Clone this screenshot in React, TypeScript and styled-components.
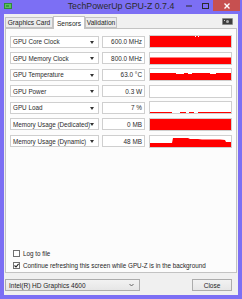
import React from 'react'
import styled, { createGlobalStyle } from 'styled-components'

const GlobalStyle = createGlobalStyle`
  html, body {
    margin: 0;
    padding: 0;
    background: #7c6ff4;
  }
  body {
    font-family: "Liberation Sans", Arial, sans-serif;
  }
`

const Window = styled.div`
  width: 242px;
  height: 299px;
  box-sizing: border-box;
  background: #7c6ff4;
  padding: 0 4px 4px 4px;
  display: flex;
  flex-direction: column;
`

const TitleBar = styled.div`
  height: 14px;
  display: flex;
  align-items: flex-start;
  position: relative;
`

const AppIcon = styled.svg`
  margin: 3px 0 0 0;
  width: 8px;
  height: 6px;
`

const Title = styled.div`
  position: absolute;
  left: 0;
  right: 0;
  top: 1px;
  text-align: center;
  font-size: 8.8px;
  line-height: 11px;
  color: #2b2b2b;
`

const Controls = styled.div`
  margin-left: auto;
  display: flex;
  align-items: flex-start;
  margin-right: -2px;
`

const CtrlButton = styled.div<{ $close?: boolean }>`
  width: ${({ $close }) => ($close ? '27px' : '16px')};
  height: 11px;
  background: ${({ $close }) => ($close ? '#c75050' : 'transparent')};
  display: flex;
  align-items: center;
  justify-content: center;
`

const Client = styled.div`
  flex: 1;
  background: #f0f0f0;
  display: flex;
  flex-direction: column;
  padding: 2px 1px 0 1px;
`

const TabStrip = styled.div`
  height: 12px;
  display: flex;
  align-items: flex-end;
  position: relative;
`

const Tab = styled.div<{ $active?: boolean; $w: number }>`
  width: ${({ $w }) => $w}px;
  height: ${({ $active }) => ($active ? '13px' : '11px')};
  box-sizing: border-box;
  border: 1px solid #c3c3c3;
  border-bottom: ${({ $active }) => ($active ? 'none' : '1px solid #c3c3c3')};
  background: ${({ $active }) => ($active ? '#ffffff' : '#ececec')};
  margin-bottom: ${({ $active }) => ($active ? '-1px' : '0')};
  font-size: 6.6px;
  color: #1e1e1e;
  display: flex;
  align-items: center;
  justify-content: center;
  position: relative;
  z-index: ${({ $active }) => ($active ? 2 : 1)};
`

const CameraIcon = styled.svg`
  position: absolute;
  right: 4px;
  top: 2px;
  width: 11px;
  height: 7px;
`

const Panel = styled.div`
  height: 245px;
  box-sizing: border-box;
  border: 1px solid #c3c3c3;
  background: #fcfcfc;
  display: flex;
  flex-direction: column;
  padding: 6px 4px 3px 4px;
`

const Rows = styled.div`
  display: flex;
  flex-direction: column;
  gap: 3.6px;
`

const Row = styled.div`
  display: flex;
  align-items: center;
  height: 13px;
`

const LabelBox = styled.div`
  width: 89px;
  height: 12px;
  box-sizing: border-box;
  border: 1px solid #cfcfcf;
  background: #ffffff;
  display: flex;
  align-items: center;
  padding-left: 2px;
  font-size: 6.3px;
  color: #2a2a2a;
  position: relative;
  white-space: nowrap;
  overflow: hidden;
`

const Arrow = styled.span`
  position: absolute;
  right: 4px;
  top: 4px;
  width: 0;
  height: 0;
  border-left: 2px solid transparent;
  border-right: 2px solid transparent;
  border-top: 3px solid #333;
`

const ValueBox = styled.div`
  width: 43px;
  height: 12px;
  margin-left: 3px;
  box-sizing: border-box;
  border: 1px solid #cfcfcf;
  background: #ffffff;
  display: flex;
  align-items: center;
  justify-content: flex-end;
  padding-right: 2px;
  font-size: 6.4px;
  color: #2a2a2a;
  white-space: nowrap;
`

const GraphBox = styled.div`
  width: 83px;
  height: 13px;
  margin-left: 4px;
  box-sizing: border-box;
  border: 1px solid #cfcfcf;
  background: #ffffff;
  display: flex;
`

const GraphSvg = styled.svg`
  width: 100%;
  height: 100%;
  display: block;
`

const Checks = styled.div`
  margin-top: auto;
  display: flex;
  flex-direction: column;
  gap: 5px;
  padding-left: 3px;
`

const CheckRow = styled.label`
  display: flex;
  align-items: center;
  gap: 3px;
  font-size: 6.3px;
  color: #1e1e1e;
  white-space: nowrap;
  height: 7px;
`

const CheckBox = styled.span`
  width: 7px;
  height: 7px;
  box-sizing: border-box;
  border: 1px solid #707070;
  background: #ffffff;
  display: flex;
  align-items: center;
  justify-content: center;
`

const Footer = styled.div`
  display: flex;
  align-items: center;
  padding: 6px 5px 0 0;
`

const Combo = styled.div`
  width: 135px;
  height: 12px;
  box-sizing: border-box;
  border: 1px solid #acacac;
  background: linear-gradient(#f2f2f2, #e6e6e6);
  display: flex;
  align-items: center;
  padding: 0 5px 0 3px;
  font-size: 6.5px;
  color: #1e1e1e;
`

const Chevron = styled.svg`
  margin-left: auto;
  width: 5px;
  height: 4px;
`

const CloseButton = styled.div`
  margin-left: auto;
  width: 40px;
  height: 12px;
  box-sizing: border-box;
  border: 1px solid #acacac;
  background: linear-gradient(#f2f2f2, #e6e6e6);
  display: flex;
  align-items: center;
  justify-content: center;
  font-size: 6.5px;
  color: #1e1e1e;
`

type Sensor = { label: string; value: string; graph: React.ReactNode }

const RED = '#ff0000'

const sensors: Sensor[] = [
  {
    label: 'GPU Core Clock',
    value: '600.0 MHz',
    graph: (
      <>
        <rect x="0" y="0" width="81" height="11" fill={RED} />
        <rect x="45" y="0" width="1" height="1" fill="#fff" />
        <rect x="48" y="0" width="1" height="1" fill="#fff" />
      </>
    ),
  },
  {
    label: 'GPU Memory Clock',
    value: '800.0 MHz',
    graph: <polygon points="0,4.5 81,4.5 81,11 0,11" fill={RED} />,
  },
  {
    label: 'GPU Temperature',
    value: '63.0 °C',
    graph: (
      <>
        <polygon points="0,4 81,4 81,11 0,11" fill={RED} />
        <rect x="26" y="4" width="8" height="1" fill="#fff" />
        <rect x="38" y="4" width="4" height="1" fill="#fff" />
        <rect x="60" y="4" width="6" height="1" fill="#fff" />
      </>
    ),
  },
  { label: 'GPU Power', value: '0.3 W', graph: null },
  {
    label: 'GPU Load',
    value: '7 %',
    graph: (
      <>
        <rect x="0" y="10" width="22" height="1" fill={RED} />
        <rect x="30" y="10" width="6" height="1" fill={RED} />
        <rect x="39" y="10" width="5" height="1" fill={RED} />
        <rect x="48" y="10" width="33" height="1" fill={RED} />
      </>
    ),
  },
  {
    label: 'Memory Usage (Dedicated)',
    value: '0 MB',
    graph: <rect x="0" y="0" width="81" height="11" fill={RED} />,
  },
  {
    label: 'Memory Usage (Dynamic)',
    value: '48 MB',
    graph: (
      <polygon
        points="0,7 22,7 23,2 38,2 40,3 48,3 52,3.5 70,3.5 75,4 76,6 81,6 81,11 0,11"
        fill={RED}
      />
    ),
  },
]

export default function App() {
  return (
    <>
      <GlobalStyle />
      <Window>
        <TitleBar>
          <AppIcon viewBox="0 0 8 6">
            <rect x="0" y="0" width="8" height="6" fill="#2f8a3a" />
            <rect x="1" y="1" width="6" height="4" fill="#5cc25c" />
            <rect x="2" y="2" width="3" height="2" fill="#3a9a44" />
          </AppIcon>
          <Title>TechPowerUp GPU-Z 0.7.4</Title>
          <Controls>
            <CtrlButton>
              <svg width="6" height="2" viewBox="0 0 6 2">
                <rect x="0" y="0.5" width="6" height="1" fill="#2b2b2b" />
              </svg>
            </CtrlButton>
            <CtrlButton>
              <svg width="7" height="6" viewBox="0 0 7 6">
                <rect x="0.5" y="0.5" width="6" height="5" fill="none" stroke="#2b2b2b" strokeWidth="1" />
              </svg>
            </CtrlButton>
            <CtrlButton $close>
              <svg width="6" height="6" viewBox="0 0 6 6">
                <path d="M0.5 0.5 L5.5 5.5 M5.5 0.5 L0.5 5.5" stroke="#fff" strokeWidth="1.4" />
              </svg>
            </CtrlButton>
          </Controls>
        </TitleBar>
        <Client>
          <TabStrip>
            <Tab $w={48}>Graphics Card</Tab>
            <Tab $w={32} $active>
              Sensors
            </Tab>
            <Tab $w={32}>Validation</Tab>
            <CameraIcon viewBox="0 0 11 7">
              <rect x="0" y="0" width="11" height="7" rx="1" fill="#8a8a8a" />
              <rect x="1" y="1" width="9" height="5" fill="#3d3d3d" />
              <circle cx="5.5" cy="3.5" r="1.5" fill="#b0b0b0" />
              <rect x="2" y="2" width="1" height="1" fill="#cfcfcf" />
            </CameraIcon>
          </TabStrip>
          <Panel>
            <Rows>
              {sensors.map((s) => (
                <Row key={s.label}>
                  <LabelBox>
                    {s.label}
                    <Arrow />
                  </LabelBox>
                  <ValueBox>{s.value}</ValueBox>
                  <GraphBox>
                    <GraphSvg viewBox="0 0 81 11" preserveAspectRatio="none">
                      {s.graph}
                    </GraphSvg>
                  </GraphBox>
                </Row>
              ))}
            </Rows>
            <Checks>
              <CheckRow>
                <CheckBox />
                Log to file
              </CheckRow>
              <CheckRow>
                <CheckBox>
                  <svg width="5" height="5" viewBox="0 0 5 5">
                    <path d="M0.5 2.5 L2 4 L4.6 0.8" fill="none" stroke="#222" strokeWidth="1.1" />
                  </svg>
                </CheckBox>
                Continue refreshing this screen while GPU-Z is in the background
              </CheckRow>
            </Checks>
          </Panel>
          <Footer>
            <Combo>
              Intel(R) HD Graphics 4600
              <Chevron viewBox="0 0 5 4">
                <path d="M0.5 1 L2.5 3 L4.5 1" fill="none" stroke="#555" strokeWidth="0.9" />
              </Chevron>
            </Combo>
            <CloseButton>Close</CloseButton>
          </Footer>
        </Client>
      </Window>
    </>
  )
}
